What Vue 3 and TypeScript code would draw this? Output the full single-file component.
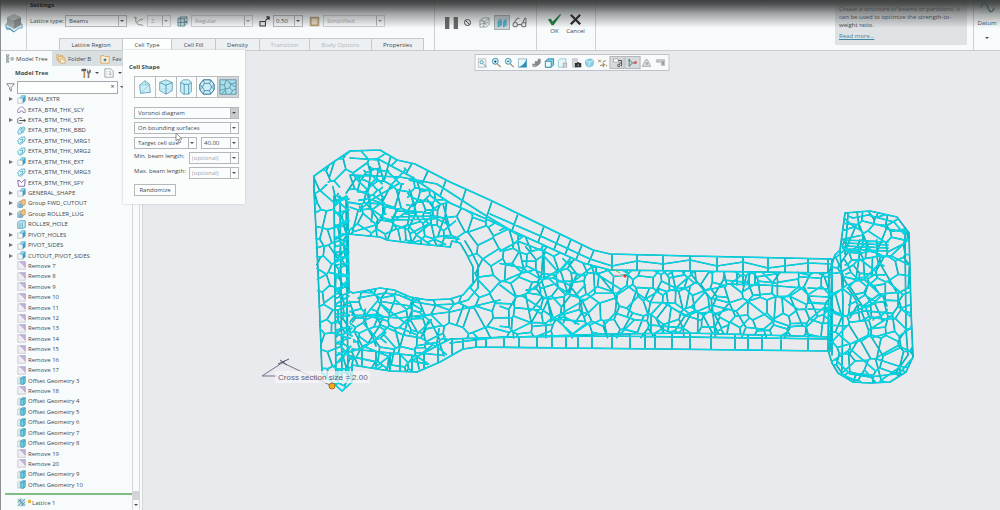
<script setup lang="ts">
import { h, ref } from 'vue'

type Shape = { d: string; f?: string; s?: string; w?: number }
type Pt = [number, number]

const blue = '#3f9fc0'
const pale = '#c9eef8'
const navy = '#4a8ba6'

const icons: Record<string, { box: number; shapes: Shape[] }> = {
  extrude: {
    box: 12,
    shapes: [
      { d: 'M1 4H8V11H1Z', f: '#f4f7f9', s: '#a4b0ba', w: 0.8 },
      { d: 'M4 4L6 1H11V8L8 10V4Z', f: '#3fa8c8', s: '#2a86a5', w: 0.6 },
      { d: 'M4 4L6 1H11L8 4Z', f: '#8ed3e6' },
    ],
  },
  curve: { box: 12, shapes: [{ d: 'M1 10V6Q3 6 3 4Q6 1 9 4Q9 6 11 6V10H8V8H4V10Z', f: '#fff', s: '#8067a8', w: 0.9 }] },
  split: {
    box: 12,
    shapes: [
      { d: 'M7 3Q3 1 1 4V9Q4 11 7 9', f: '#fff', s: '#54515c', w: 1 },
      { d: 'M3 6H11M9 4L11 6L9 8', s: '#3d3d45', w: 1.2 },
    ],
  },
  blend: {
    box: 12,
    shapes: [
      { d: 'M1 8L4 2L8 3L6 10L2 11Z', f: '#d3f0f8', s: blue, w: 0.9 },
      { d: 'M5 4L9 1L11 3L8 9L6 8Z', f: '#a5dcea', s: blue, w: 0.8 },
    ],
  },
  merge: { box: 12, shapes: [{ d: 'M1 6L5 2L10 1L11 4L9 8L5 11L2 10ZM4 5L8 4L7 8L4 9', f: '#e6f8fb', s: '#38a2bd', w: 1 }] },
  surface: { box: 12, shapes: [{ d: 'M1 3L2 11H10L11 2L8 4L6 6L4 4Z', f: '#fff', s: '#71549b', w: 1.1 }] },
  group: {
    box: 12,
    shapes: [
      { d: 'M1 5L3 3H7V11H1Z', f: '#b7d6ef', s: '#6387ac', w: 0.8 },
      { d: 'M5 4L7 1H11V7L9 9H5Z', f: '#f3c477', s: '#c08439', w: 0.8 },
      { d: 'M3 7H7V11H3Z', f: '#7ec4e6', s: '#4986b0', w: 0.6 },
    ],
  },
  hole: { box: 12, shapes: [{ d: 'M1 3L4 1H11V10L8 11H1ZM4 4V10M7 3V10', f: '#c8eaf2', s: '#3f93ae', w: 1 }] },
  remove: {
    box: 12,
    shapes: [
      { d: 'M1 1H11V11H1Z', f: '#f0edf3', s: '#b9b6bf', w: 0.8 },
      { d: 'M4 1H11V8Z', f: '#c3b7df', s: '#9a8dc0', w: 0.6 },
    ],
  },
  offset: {
    box: 12,
    shapes: [
      { d: 'M1 3L4 1V10L1 11Z', f: '#eef6f8', s: '#a3b3bb', w: 0.8 },
      { d: 'M5 3L7 1H11V9L9 11H5Z', f: '#6fd0e6', s: '#2b88a5', w: 0.9 },
      { d: 'M9 3V11M5 3H9L11 1', s: '#2b88a5', w: 0.7 },
    ],
  },
  lattice: {
    box: 12,
    shapes: [
      { d: 'M1 1H11V11H1Z', f: '#bfdfe6' },
      { d: 'M1 11L11 1M1 6L6 1M5 11L11 5M1 2L11 10M4 1L8 11', s: '#4f8b99', w: 0.9 },
    ],
  },
  tree: { box: 12, shapes: [{ d: 'M2 1H5V3H2ZM2 5H5V7H2ZM2 9H5V11H2ZM8 5H11V8H8ZM3 3V5M3 7V9', s: '#6d7175', w: 0.9 }] },
  folders: {
    box: 12,
    shapes: [
      { d: 'M1 1H4L5 2H8V7H1Z', f: '#f4d9a4', s: '#c9995a', w: 0.8 },
      { d: 'M3 3H6L7 4H10V9H3Z', f: '#f7e3bb', s: '#c9995a', w: 0.8 },
      { d: 'M5 6H8L9 7H11V11H5Z', f: '#fbeed2', s: '#c9995a', w: 0.8 },
    ],
  },
  favorite: {
    box: 12,
    shapes: [
      { d: 'M1 2H5L6 3H11V11H1Z', f: '#fbeccc', s: '#cf9f62', w: 0.9 },
      { d: 'M6 5L8 7L6 9L4 7Z', f: '#2b7faa' },
    ],
  },
  tools: {
    box: 12,
    shapes: [
      { d: 'M0 2L2 1H6V4H1Z', f: '#5c5c5c' },
      { d: 'M3 4H5V12H3Z', f: '#c98749' },
      { d: 'M8 1V4H10V1L12 3V5L10 7V12H8V7L7 5V2Z', f: '#777' },
    ],
  },
  sheet: { box: 12, shapes: [{ d: 'M1 1H8L11 4V11H1ZM3 4H4M6 4H8M3 6H4M6 6H9M3 8H4M6 8H9', f: '#fff', s: '#777b80', w: 0.8 }] },
  funnel: { box: 12, shapes: [{ d: 'M1 1H11L7 6V11L5 9V6Z', f: '#fff', s: '#606468', w: 1 }] },
  wedge: { box: 20, shapes: [{ d: 'M4 8L10 3L15 7L16 16L5 17Z', f: pale, s: navy, w: 0.8 }, { d: 'M4 8L15 7L5 17M10 3L11 8', s: '#69b7cf', w: 0.6 }] },
  cube: { box: 20, shapes: [{ d: 'M3 5L10 2L17 5V14L10 18L3 14Z', f: pale, s: navy, w: 0.8 }, { d: 'M3 5L10 8L17 5M10 8V18', s: '#2e7f9f', w: 0.8 }, { d: 'M3 14L10 11L17 14M10 2V11', s: '#83c8dc', w: 0.5 }] },
  prism: { box: 20, shapes: [{ d: 'M4 5L7 2H13L16 5V15L13 18H7L4 15Z', f: pale, s: navy, w: 0.8 }, { d: 'M4 5L8 7H13L16 5M8 7V18M13 7V18', s: '#2e7f9f', w: 0.8 }] },
  soccer: {
    box: 20,
    shapes: [
      { d: 'M6 2H14L18 7V13L14 18H6L2 13V7Z', f: pale, s: '#2f6e8c', w: 1.1 },
      { d: 'M7 6H13L15 10L13 14H7L5 10ZM6 2L7 6M14 2L13 6M18 7L15 10L18 13M14 18L13 14M6 18L7 14M2 13L5 10L2 7', s: '#37789a', w: 0.8 },
    ],
  },
  voronoi: {
    box: 20,
    shapes: [
      { d: 'M1 2H19V18H1Z', f: '#a9dfec', s: '#447d90', w: 0.8 },
      { d: 'M1 7L6 8L8 2M6 8L7 12L1 14M7 12L12 11L13 7L8 2M13 7L19 5M12 11L15 14L19 12M15 14L13 18M7 12L8 18M11 4L16 9L19 9M3 18L7 13', s: '#4a8498', w: 0.8 },
    ],
  },
  product: {
    box: 20,
    shapes: [
      { d: 'M2 11L10 8L18 11V15L15 15L10 19L5 15H2Z', f: '#d7edf3', s: '#5aa2b8', w: 1 },
      { d: 'M3 4L10 7V16L3 12Z', f: '#a4a7aa' },
      { d: 'M17 4L10 7V16L17 12Z', f: '#85898d' },
      { d: 'M3 4L10 1L17 4L10 7Z', f: '#b9bcbe' },
      { d: 'M2 16L6 16L10 19', s: '#387e99', w: 1 },
    ],
  },
  axis: { box: 12, shapes: [{ d: 'M1 1L4 3M3 1V5Q3 9 9 10M4 7L9 3M9 5L11 3M9 9L11 11', s: '#8b8580', w: 1 }] },
  cellbox: { box: 12, shapes: [{ d: 'M1 3L4 1H11V8L8 11H1Z', f: '#bde4ec', s: '#647a83', w: 0.8 }, { d: 'M1 3H8V11M8 3L11 1M1 7H11M4 1V11M8 6H11', s: '#54717b', w: 0.8 }] },
  scale: { box: 12, shapes: [{ d: 'M1 6H7V11H1Z', f: '#eee', s: '#333', w: 1.1 }, { d: 'M7 5L11 1M8 1H11V4', s: '#222', w: 1.3 }] },
  frame: { box: 12, shapes: [{ d: 'M2 2H10V10H2Z', f: '#eadcc8', s: '#bd9666', w: 1.6 }, { d: 'M1 1H11V11H1Z', s: '#9e9b96', w: 0.5 }] },
  pause: { box: 12, shapes: [{ d: 'M0 1H4V12H0ZM8 1H12V12H8Z', f: '#686868' }] },
  forbid: { box: 12, shapes: [{ d: 'M2 6A4 4 0 1 1 10 6A4 4 0 1 1 2 6M3 3L9 9', s: '#404040', w: 1.3 }] },
  wirecube: { box: 12, shapes: [{ d: 'M1 4L4 1H11V8L8 11H1ZM1 4L6 5L11 2M6 5L5 11M3 2L8 9M1 8L10 6', s: '#8c8f91', w: 0.8 }] },
  preview: { box: 12, shapes: [{ d: 'M1 5L5 3V9L1 11ZM7 5L10 3V9L7 11Z', f: '#49b3d5', s: '#2d8fb1', w: 0.5 }, { d: 'M1 3L5 2M7 3L11 2', s: '#77b8cb', w: 1 }] },
  glasses: { box: 14, shapes: [{ d: 'M1 9A2 2 0 1 1 5 9A2 2 0 1 1 1 9M9 9A2 2 0 1 1 13 9A2 2 0 1 1 9 9M5 9H9M2 7L5 3H7M10 7L12 3H13V8', s: '#777', w: 1 }] },
  check: { box: 16, shapes: [{ d: 'M1 8L4 7L6 10L14 2L15 3L7 14H5Z', f: '#1f803d' }] },
  cross: { box: 16, shapes: [{ d: 'M3 3L13 13M13 3L3 13', s: '#222', w: 2.4 }] },
  wave: { box: 16, shapes: [{ d: 'M1 8C3 1 6 1 8 7S13 15 15 8', s: '#2d7d9d', w: 1.4 }, { d: 'M2 13H3M6 13H7M10 13H11M14 3H15M2 3H3', s: '#999', w: 0.8 }] },
  fit: { box: 12, shapes: [{ d: 'M1 1H10V11H1Z', f: '#f3f6f7', s: '#9ca4a8', w: 0.8 }, { d: 'M3 5A2 2 0 1 1 7 5A2 2 0 1 1 3 5M7 7L11 11', s: '#4a98b4', w: 1.1 }] },
  plus: { box: 12, shapes: [{ d: 'M1 4A3 3 0 1 1 8 4A3 3 0 1 1 1 4', f: '#def5fb', s: '#2b88aa', w: 1.1 }, { d: 'M3 4H6M4.5 3V6', s: '#174f6a', w: 1.1 }, { d: 'M7 7L11 11', s: '#a6835c', w: 1.4 }] },
  minus: { box: 12, shapes: [{ d: 'M1 4A3 3 0 1 1 8 4A3 3 0 1 1 1 4', f: '#def5fb', s: '#2b88aa', w: 1.1 }, { d: 'M3 4H6', s: '#174f6a', w: 1.1 }, { d: 'M7 7L11 11', s: '#a6835c', w: 1.4 }] },
  repaint: { box: 12, shapes: [{ d: 'M1 1H11V11H1Z', f: '#edf8fb', s: '#6f9fb0', w: 0.8 }, { d: 'M11 1V11H1Q8 9 11 1', f: '#2f8fb4' }] },
  render: { box: 12, shapes: [{ d: 'M1 10V7H4V4H7L8 1H11V6L8 9L4 11Z', f: '#85898b' }, { d: 'M1 10L5 9', s: '#bcc0c2', w: 1.4 }] },
  solid: { box: 12, shapes: [{ d: 'M1 4L4 1H11V8L8 11H1Z', f: '#7ecfe4', s: '#237c9c', w: 1 }, { d: 'M1 4H8V11H1Z', f: '#eefafd', s: '#237c9c', w: 0.9 }] },
  views: { box: 12, shapes: [{ d: 'M1 3L3 1H10V8L8 11H1Z', f: '#e6f7fb', s: '#80bfd2', w: 0.9 }, { d: 'M7 6H11V11H7Z', f: '#d8d8d8', s: '#8b8b8b', w: 0.7 }] },
  camera: { box: 12, shapes: [{ d: 'M1 1H7V11H1Z', f: '#d4d7d9', s: '#a8acaf', w: 0.6 }, { d: 'M4 6H6L7 5H9L10 6H12V11H4Z', f: '#333' }, { d: 'M7 8H9V9H7Z', f: '#eee' }] },
  perspective: { box: 12, shapes: [{ d: 'M1 3L7 1L11 3L10 9L5 11L2 9Z', f: '#8dd3e7', s: '#5faac1', w: 0.8 }, { d: 'M1 3L6 5L11 3M6 5L5 11', s: '#e6f7fb', w: 0.9 }] },
  datums: { box: 12, shapes: [{ d: 'M1 2L4 5M4 2L1 5M6 5L10 3M3 9L9 8M7 6V11M10 8L11 10', s: '#9a7440', w: 1.1 }] },
  notes: { box: 12, shapes: [{ d: 'M1 1H7V5H1Z', f: '#fff', s: '#888', w: 0.8 }, { d: 'M7 3H11V10M6 9A1 1 0 1 1 9 9A1 1 0 1 1 6 9M8 6H11', s: '#333', w: 1 }] },
  spin: { box: 12, shapes: [{ d: 'M2 2V10M2 10L6 6L2 2M6 6H9', s: '#3a7789', w: 1.1 }, { d: 'M8 4H11V7H8Z', f: '#d1564d' }, { d: 'M1 1H3V3H1Z', f: '#51a05a' }] },
  warning: { box: 12, shapes: [{ d: 'M5 2H7L11 10H1Z', f: '#e1e2e3', s: '#9b9ea0', w: 1 }, { d: 'M5 5H8V8H5Z', f: '#a7aaac' }] },
  stop: { box: 12, shapes: [{ d: 'M1 2H11V9H7V5H1Z', f: '#c5c8ca', s: '#aaaeb0', w: 0.8 }, { d: 'M8 4H10V8H8Z', f: '#8f9395' }] },
}

const Icon = (p: { name: string }) => {
  const g = icons[p.name]
  return h(
    'svg',
    { viewBox: `0 0 ${g.box} ${g.box}`, 'aria-hidden': 'true' },
    g.shapes.map((s) => h('path', { d: s.d, fill: s.f ?? 'none', stroke: s.s ?? 'none', 'stroke-width': s.w ?? 1, 'stroke-linejoin': 'round' })),
  )
}
Icon.props = ['name']

const tabs = [
  { label: 'Lattice Region', w: 'w64' },
  { label: 'Cell Type', w: 'w49', active: true },
  { label: 'Cell Fill', w: 'w44' },
  { label: 'Density', w: 'w44' },
  { label: 'Transition', w: 'w50', off: true },
  { label: 'Body Options', w: 'w62', off: true },
  { label: 'Properties', w: 'w52' },
]

type Row = { label: string; icon: string; open?: boolean }
const named: Row[] = [
  { label: 'MAIN_EXTR', icon: 'extrude', open: true },
  { label: 'EXTA_BTM_THK_SCY', icon: 'curve' },
  { label: 'EXTA_BTM_THK_STF', icon: 'split', open: true },
  { label: 'EXTA_BTM_THK_BBD', icon: 'blend' },
  { label: 'EXTA_BTM_THK_MRG1', icon: 'merge' },
  { label: 'EXTA_BTM_THK_MRG2', icon: 'merge' },
  { label: 'EXTA_BTM_THK_EXT', icon: 'extrude', open: true },
  { label: 'EXTA_BTM_THK_MRG3', icon: 'merge' },
  { label: 'EXTA_BTM_THK_SFY', icon: 'surface' },
  { label: 'GENERAL_SHAPE', icon: 'extrude', open: true },
  { label: 'Group FWD_CUTOUT', icon: 'group', open: true },
  { label: 'Group ROLLER_LUG', icon: 'group', open: true },
  { label: 'ROLLER_HOLE', icon: 'hole' },
  { label: 'PIVOT_HOLES', icon: 'extrude', open: true },
  { label: 'PIVOT_SIDES', icon: 'extrude', open: true },
  { label: 'CUTOUT_PIVOT_SIDES', icon: 'extrude', open: true },
]
const removes = (a: number, b: number): Row[] =>
  Array.from({ length: b - a + 1 }, (_, i) => ({ label: `Remove ${a + i}`, icon: 'remove' }))
const offsets = (a: number, b: number): Row[] =>
  Array.from({ length: b - a + 1 }, (_, i) => ({ label: `Offset Geometry ${a + i}`, icon: 'offset' }))
const rows: Row[] = [...named, ...removes(7, 17), ...offsets(3, 3), ...removes(18, 18), ...offsets(4, 8), ...removes(19, 20), ...offsets(9, 10)]

const shapes = ['wedge', 'cube', 'prism', 'soccer', 'voronoi']
const cell = ref('voronoi')
const tools = ['fit', 'plus', 'minus', 'repaint', 'render', 'solid', 'views', 'camera', 'perspective', 'datums', 'notes', 'spin', 'warning', 'stop']
const pressed = new Set(['notes', 'spin'])
const scaleValue = ref('0.50')
const cellSize = ref('40.00')
const minBeam = ref('')
const maxBeam = ref('')
const search = ref('')

// Lattice geometry ------------------------------------------------------
function random(seed: number) {
  let a = seed
  return () => {
    a = (a + 0x6d2b79f5) | 0
    let t = Math.imul(a ^ (a >>> 15), 1 | a)
    t = (t + Math.imul(t ^ (t >>> 7), 61 | t)) ^ t
    return ((t ^ (t >>> 14)) >>> 0) / 4294967296
  }
}

function inside(p: Pt, poly: Pt[]) {
  let hit = false
  for (let i = 0, j = poly.length - 1; i < poly.length; j = i++) {
    const [xi, yi] = poly[i]
    const [xj, yj] = poly[j]
    if (yi > p[1] !== yj > p[1] && p[0] < ((xj - xi) * (p[1] - yi)) / (yj - yi) + xi) hit = !hit
  }
  return hit
}

function voronoi(box: [number, number, number, number], step: number, seed: number): [Pt, Pt][] {
  const rnd = random(seed)
  const [x0, y0, x1, y1] = box
  const pts: Pt[] = []
  for (let y = y0 - step; y < y1 + step; y += step)
    for (let x = x0 - step; x < x1 + step; x += step) pts.push([x + rnd() * step * 1.25, y + rnd() * step * 1.25])
  const edges: [Pt, Pt][] = []
  const reach = step * 3
  pts.forEach((p, i) => {
    let poly: Pt[] = [
      [p[0] - reach, p[1] - reach],
      [p[0] + reach, p[1] - reach],
      [p[0] + reach, p[1] + reach],
      [p[0] - reach, p[1] + reach],
    ]
    let owner: number[] = [-1, -1, -1, -1]
    pts.forEach((q, k) => {
      const dx = q[0] - p[0]
      const dy = q[1] - p[1]
      if (k === i || Math.abs(dx) > reach * 1.5 || Math.abs(dy) > reach * 1.5) return
      const c = (q[0] * q[0] + q[1] * q[1] - p[0] * p[0] - p[1] * p[1]) / 2
      const out: Pt[] = []
      const own: number[] = []
      for (let n = 0; n < poly.length; n++) {
        const a = poly[n]
        const b = poly[(n + 1) % poly.length]
        const da = a[0] * dx + a[1] * dy - c
        const db = b[0] * dx + b[1] * dy - c
        const t = da / (da - db)
        const m: Pt = [a[0] + (b[0] - a[0]) * t, a[1] + (b[1] - a[1]) * t]
        if (da <= 0) {
          out.push(a)
          own.push(owner[n])
          if (db > 0) {
            out.push(m)
            own.push(k)
          }
        } else if (db <= 0) {
          out.push(m)
          own.push(owner[n])
        }
      }
      poly = out
      owner = own
    })
    poly.forEach((a, n) => {
      if (owner[n] > i) edges.push([a, poly[(n + 1) % poly.length]])
    })
  })
  return edges
}

const hole: Pt[] = [[348, 234], [380, 237], [387, 240], [410, 243], [450, 247], [452, 241], [460, 243], [466, 253], [473, 267], [473, 283], [463, 295], [450, 299], [428, 300], [410, 297], [394, 290], [380, 288], [353, 293], [349, 291]]
const outline: Pt[] = [[314, 176], [332, 163], [350, 151], [380, 150], [397, 160], [415, 164], [450, 182], [490, 200], [593, 250], [610, 254], [690, 256], [832, 259], [830, 351], [660, 349], [477, 347], [463, 349], [440, 362], [417, 372], [390, 371], [352, 365], [352, 382], [342, 391], [322, 373], [318, 270], [314, 190]]
const topRail: Pt[] = [[350, 158], [380, 160], [410, 176], [450, 203], [493, 222], [550, 248], [583, 263], [610, 270], [690, 271], [832, 273]]
const bottomRail: Pt[] = [[352, 349], [390, 353], [418, 356], [450, 339], [610, 334], [690, 333], [830, 337]]
const topOuter: Pt[] = [[380, 150], [397, 160], [415, 164], [450, 182], [490, 200], [593, 250], [610, 254], [690, 256], [832, 259]]
const bottomOuter: Pt[] = [[352, 365], [390, 371], [417, 372], [440, 362], [463, 349], [477, 347], [660, 349], [830, 351]]
const face: Pt[] = [[410, 176], [450, 203], [493, 222], [550, 248], [583, 263], [610, 270], [690, 271], [832, 273], [830, 337], [690, 333], [610, 334], [450, 339], [418, 356], [405, 320], [405, 220]]
const drum: Pt[] = [[845, 213], [870, 211], [897, 217], [909, 233], [911, 310], [913, 357], [906, 372], [890, 382], [870, 383], [853, 382], [838, 373], [832, 363], [828, 350], [829, 273], [835, 255], [840, 250]]
const strip: Pt[] = [[314, 178], [322, 184], [347, 190], [349, 230], [349, 300], [352, 330], [352, 382], [342, 391], [322, 373], [317, 270]]
const column: Pt[] = [[334, 195], [347, 190], [349, 300], [352, 380], [342, 388], [336, 330]]
const cap: Pt[] = [[314, 176], [332, 163], [350, 151], [380, 150], [397, 160], [412, 176], [430, 190], [452, 204], [460, 243], [450, 247], [348, 234], [346, 190]]
const lower: Pt[] = [[349, 293], [380, 288], [412, 298], [440, 330], [455, 350], [417, 370], [390, 371], [352, 365]]

type Layer = { area: Pt[]; step: number; seed: number }
const layers: Layer[] = [
  { area: face, step: 15, seed: 11 },
  { area: [[500, 226], [583, 263], [610, 270], [832, 273], [830, 337], [500, 338]], step: 26, seed: 5 },
  { area: [[520, 245], [583, 265], [590, 325], [530, 320]], step: 16, seed: 29 },
  { area: [[660, 272], [725, 272], [730, 333], [655, 333]], step: 17, seed: 8 },
  { area: cap, step: 16, seed: 7 },
  { area: [[350, 170], [382, 165], [410, 190], [450, 212], [450, 245], [385, 238], [350, 233]], step: 19, seed: 3 },
  { area: [[355, 172], [380, 168], [386, 215], [362, 226]], step: 10, seed: 43 },
  { area: strip, step: 14, seed: 17 },
  { area: column, step: 10, seed: 23 },
  { area: lower, step: 16, seed: 37 },
  { area: lower, step: 24, seed: 4 },
  { area: [[352, 310], [385, 308], [386, 345], [354, 348]], step: 10, seed: 2 },
  { area: drum, step: 16, seed: 19 },
  { area: drum, step: 23, seed: 31 },
  { area: [[843, 240], [882, 240], [888, 320], [850, 320]], step: 12, seed: 13 },
]

const bright: string[] = []
const shade: string[] = []
const f = (n: number) => n.toFixed(1)
function beam(a: Pt, b: Pt) {
  const steep = Math.abs(b[1] - a[1]) > Math.abs(b[0] - a[0]) * 1.2
  ;(steep ? shade : bright).push(`M${f(a[0])} ${f(a[1])}L${f(b[0])} ${f(b[1])}`)
}
function chain(line: Pt[], closed = false) {
  line.forEach((p, i) => {
    if (i) beam(line[i - 1], p)
  })
  if (closed) beam(line[line.length - 1], line[0])
}
function heightAt(line: Pt[], x: number) {
  for (let i = 1; i < line.length; i++) {
    const [ax, ay] = line[i - 1]
    const [bx, by] = line[i]
    if (x >= ax && x <= bx) return ay + ((by - ay) * (x - ax)) / (bx - ax)
  }
  return line[line.length - 1][1]
}
function rungs(a: Pt[], b: Pt[], xs: number[], lean = 0) {
  xs.forEach((x) => beam([x, heightAt(a, x)], [x - lean, heightAt(b, x - lean)]))
}
// Shortens a beam that leaves the area so that it stops on the boundary.
function trimmed(from: Pt, to: Pt, ok: (p: Pt) => boolean): Pt {
  let a = from
  let b = to
  for (let i = 0; i < 8; i++) {
    const m: Pt = [(a[0] + b[0]) / 2, (a[1] + b[1]) / 2]
    if (ok(m)) a = m
    else b = m
  }
  return a
}

for (const l of layers) {
  const xs = l.area.map((p) => p[0])
  const ys = l.area.map((p) => p[1])
  const ok = (p: Pt) => inside(p, l.area) && !inside(p, hole)
  for (const [a, b] of voronoi([Math.min(...xs), Math.min(...ys), Math.max(...xs), Math.max(...ys)], l.step, l.seed)) {
    if (ok(a) && ok(b)) beam(a, b)
    else if (ok(a)) beam(a, trimmed(a, b, ok))
    else if (ok(b)) beam(b, trimmed(b, a, ok))
  }
}
chain(outline, true)
chain(hole, true)
chain(hole.slice(6, 17).map(([x, y]): Pt => [x + 5, y + (y > 275 ? 5 : -2)]))
chain(topRail)
chain(bottomRail)
chain([[450, 343], [500, 337], [610, 336], [830, 339]])
chain([[490, 214], [545, 238], [590, 259], [612, 266], [637, 261], [663, 264], [690, 260], [717, 266], [743, 262], [768, 268], [808, 263], [832, 264]])
chain([[350, 175], [400, 177], [437, 184], [480, 212], [520, 236]])
chain([[352, 315], [400, 318], [450, 312], [500, 300]])
rungs(topOuter, topRail, [397, 412, 428, 446, 466, 492, 518, 544, 560, 571, 582, 594], 6)
rungs(topOuter, topRail, [612, 637, 663, 690, 717, 743, 768, 785, 808, 828])
rungs(bottomOuter, bottomRail, [362, 376, 390, 400, 412, 424, 438, 452, 463, 476, 486, 504, 519, 537, 552, 566, 578, 592, 612, 630, 645, 655, 672, 690, 711, 735, 748, 762, 781, 808])
chain(drum, true)
chain([[848, 216], [853, 218], [868, 215], [894, 222], [905, 235], [906, 330], [908, 355], [895, 374], [870, 377], [850, 374], [836, 360]])
chain([[840, 250], [843, 300], [842, 370]])
chain([[832, 262], [832, 355]])
chain([[848, 214], [845, 254]])
for (const x of [737, 743, 749, 755]) beam([x, 272], [x, 285])
chain([[728, 284], [765, 285], [803, 288]])
for (const y of [288, 296, 303, 309]) beam([808, y], [829, y + 1])
for (const x of [334, 340, 346]) beam([x, 196], [x + 2, 380])
for (let y = 200; y < 372; y += 13) beam([336, y], [349, y - ((y * 5) % 9)])
for (const y of [240, 243, 246, 249]) beam([845, y], [888, y + 2])
for (const y of [217, 220]) beam([392, y], [434, y - 1])

const brightPath = bright.join('')
const shadePath = shade.join('')
</script>

<template>
  <div class="app">
    <header class="ribbon">
      <div class="product"><Icon name="product" class="product-icon" /></div>
      <section class="settings">
        <h2>Settings</h2>
        <div class="fields">
          <label for="ltype">Lattice type:</label>
          <span class="pick pick-type"><select id="ltype"><option>Beams</option></select></span>
          <Icon name="axis" class="ic11" />
          <span class="pick pick-axis off"><select aria-label="Axis" disabled><option>Z</option></select></span>
          <Icon name="cellbox" class="ic11" />
          <span class="pick pick-reg off"><select aria-label="Cell layout" disabled><option>Regular</option></select></span>
          <Icon name="scale" class="ic11" />
          <span class="combo combo-scale"><input v-model="scaleValue" aria-label="Scale" /><button aria-label="Scale values"></button></span>
          <Icon name="frame" class="ic11" />
          <span class="pick pick-simple off"><select aria-label="Representation" disabled><option>Simplified</option></select></span>
        </div>
        <nav class="tabs">
          <button v-for="t in tabs" :key="t.label" :class="[t.w, { active: t.active }]" :disabled="t.off">{{ t.label }}</button>
        </nav>
      </section>
      <section class="controls">
        <button aria-label="Pause"><Icon name="pause" class="ic12" /></button>
        <button aria-label="No preview"><Icon name="forbid" class="ic9" /></button>
        <button aria-label="Wireframe preview"><Icon name="wirecube" class="ic11" /></button>
        <button class="on" aria-label="Attached preview"><Icon name="preview" class="ic11" /></button>
        <button aria-label="Verify"><Icon name="glasses" class="ic14" /></button>
      </section>
      <section class="confirm">
        <button><Icon name="check" class="ic14" />OK</button>
        <button><Icon name="cross" class="ic14" />Cancel</button>
      </section>
      <aside class="info">
        <p>Create a structure of beams or partitions. It can be used to optimize the strength-to-weight ratio.</p>
        <a href="#">Read more...</a>
      </aside>
      <button class="datum"><Icon name="wave" class="ic14" /><span>Datum</span><i class="caret"></i></button>
    </header>

    <main class="body">
      <section class="side">
        <nav class="side-tabs">
          <button class="current"><Icon name="tree" class="ic9" />Model Tree</button>
          <button><Icon name="folders" class="ic10" />Folder B</button>
          <button><Icon name="favorite" class="ic10" />Fav</button>
        </nav>
        <div class="side-head">
          <h2>Model Tree</h2>
          <button aria-label="Tree tools"><Icon name="tools" class="ic10" /><i class="caret"></i></button>
          <button aria-label="Tree columns"><Icon name="sheet" class="ic10" /><i class="caret"></i></button>
        </div>
        <div class="filter">
          <Icon name="funnel" class="ic9" />
          <div class="search"><input v-model="search" aria-label="Filter tree" /><button aria-label="Clear">×</button></div>
          <i class="caret"></i>
        </div>
        <div class="tree-wrap">
          <div class="tree">
            <ul>
              <li v-for="r in rows" :key="r.label">
                <i :class="{ twist: r.open }"></i>
                <Icon :name="r.icon" class="ic9" />
                <span>{{ r.label }}</span>
              </li>
            </ul>
            <div class="last"><i></i><Icon name="lattice" class="ic9" /><b></b><span>Lattice 1</span></div>
          </div>
          <div class="scroll"><span class="thumb"></span><button aria-label="Scroll down"><i class="caret"></i></button></div>
        </div>
      </section>

      <section class="view">
        <svg class="model" viewBox="143 51 857 459" role="img" aria-label="Lattice model">
          <path class="beams under" :d="shadePath + brightPath" />
          <path class="beams dark" :d="shadePath" />
          <path class="beams light" :d="brightPath" />
          <path d="M611 268L620 273" stroke="#5cc06a" />
          <path d="M613 275L624 276" stroke="#efa6a2" />
          <circle cx="625" cy="276" r="1.5" fill="#e2362e" />
          <path d="M262 376L285 361M262 376H277M281 362L332 386" fill="none" stroke="#77728d" />
          <path d="M278 364L289 359M280 360L287 365" stroke="#55506b" />
          <rect x="275" y="371" width="95" height="12" fill="#f6f6fa" fill-opacity=".72" />
          <text x="278" y="380">Cross section size = 2.00</text>
          <circle cx="332" cy="386" r="3" fill="#f7a823" stroke="#a36a17" />
        </svg>
        <div class="tools">
          <button v-for="t in tools" :key="t" :class="{ on: pressed.has(t) }" :aria-label="t"><Icon :name="t" class="ic10" /></button>
        </div>
      </section>
    </main>

    <section class="popup">
      <h3>Cell Shape</h3>
      <div class="cells">
        <button v-for="s in shapes" :key="s" :class="{ on: cell === s }" :aria-label="s" @click="cell = s"><Icon :name="s" class="ic18" /></button>
      </div>
      <div class="form">
        <span class="pick gray"><select aria-label="Cell pattern"><option>Voronoi diagram</option></select></span>
        <span class="pick"><select aria-label="Seed placement"><option>On bounding surfaces</option></select></span>
        <div class="pair">
          <span class="pick pick-target"><select aria-label="Size mode"><option>Target cell size</option></select></span>
          <span class="combo"><input v-model="cellSize" aria-label="Target cell size" /><button aria-label="Size values"></button></span>
        </div>
        <div class="line">
          <label for="minb">Min. beam length:</label>
          <span class="combo"><input id="minb" v-model="minBeam" placeholder="(optional)" /><button aria-label="Minimum values"></button></span>
        </div>
        <div class="line">
          <label for="maxb">Max. beam length:</label>
          <span class="combo"><input id="maxb" v-model="maxBeam" placeholder="(optional)" /><button aria-label="Maximum values"></button></span>
        </div>
      </div>
      <button class="randomize">Randomize</button>
      <svg class="cursor" viewBox="0 0 8 12" aria-hidden="true"><path d="M1 1V9L3 7L4 11L6 10L4 7H7Z" fill="#fff" stroke="#777" stroke-width=".8" /></svg>
    </section>
  </div>
</template>

<style>
body {
  margin: 0;
}
</style>

<style scoped>
.app {
  position: relative;
  display: flex;
  flex-direction: column;
  min-height: 100vh;
  box-sizing: border-box;
  border-left: 1px solid #8d9092;
  background: #e8eaee;
  color: #45484b;
  font: 6px/8px "Open Sans", "Noto Sans", sans-serif;
}
.app::after {
  content: "";
  position: absolute;
  inset: 0 0 auto -1px;
  height: 28px;
  background: linear-gradient(#3e4040 0, rgba(62, 64, 64, 0.9) 15%, rgba(62, 64, 64, 0.45) 50%, rgba(62, 64, 64, 0));
  pointer-events: none;
}
.app *,
.app *::before {
  box-sizing: border-box;
}
button,
input,
select {
  margin: 0;
  padding: 0;
  border: 0;
  border-radius: 0;
  background: none;
  color: inherit;
  font: inherit;
  min-width: 0;
}
h2,
h3,
p,
ul {
  margin: 0;
  padding: 0;
  font-size: inherit;
  list-style: none;
}
svg {
  display: block;
  flex: none;
}
.ic9 { width: 9px; height: 9px; }
.ic10 { width: 10px; height: 10px; }
.ic11 { width: 11px; height: 11px; }
.ic12 { width: 13px; height: 13px; }
.ic14 { width: 15px; height: 15px; }
.ic18 { width: 18px; height: 18px; }

.ribbon {
  display: flex;
  height: 51px;
  border-bottom: 1px solid #c9cccf;
  background: #f7fbfc;
}
.product {
  width: 26px;
  padding: 13px 0 0 3px;
  border-right: 1px solid #d0d3d5;
}
.product-icon {
  width: 20px;
  height: 20px;
}
.settings {
  display: flex;
  flex-direction: column;
  width: 408px;
  padding-left: 3px;
  border-right: 1px solid #cdd0d2;
}
.settings h2 {
  position: relative;
  z-index: 1;
  height: 14px;
  color: #1d1e1f;
  font-size: 6px;
  line-height: 10px;
}
.fields {
  display: flex;
  align-items: center;
  height: 14px;
}
.fields > svg {
  margin: 0 3px 0 6px;
}
.fields > label {
  width: 35px;
  white-space: nowrap;
}
.pick,
.combo {
  position: relative;
  display: flex;
  height: 12px;
  border: 1px solid #b5b8bb;
  background: #fbfcfd;
}
.pick select {
  width: 100%;
  padding: 0 10px 0 3px;
  appearance: none;
  line-height: 10px;
  opacity: 1;
}
.pick::before,
.combo button {
  content: "";
  width: 8px;
  border-left: 1px solid #b5b8bb;
}
.pick::before {
  position: absolute;
  inset: 0 0 0 auto;
  pointer-events: none;
}
.pick::after,
.combo::after {
  content: "";
  position: absolute;
  right: 2px;
  top: 4px;
  border: 2px solid transparent;
  border-top: 2px solid #4f5254;
  border-bottom: 0;
  pointer-events: none;
}
.combo input {
  flex: 1;
  width: 0;
  padding: 0 2px;
}
.combo input::placeholder {
  color: #a5a7a9;
}
.off {
  color: #a9acae;
  border-color: #cfd2d4;
}
.off::after {
  border-top-color: #999;
}
.pick-type { width: 62px; }
.pick-axis { width: 24px; }
.pick-reg { width: 62px; }
.combo-scale { width: 30px; }
.pick-simple { width: 62px; }
.tabs {
  display: flex;
  height: 12px;
  margin: auto 0 0 29px;
}
.tabs button {
  border: 1px solid #c6c9cc;
  border-width: 1px 1px 0 0;
  background: #edf0f2;
  white-space: nowrap;
}
.tabs button:first-child {
  border-left-width: 1px;
}
.tabs .active {
  background: #fdfefe;
}
.tabs button:disabled {
  color: #b4b7b9;
}
.w64 { width: 64px; }
.w49 { width: 49px; }
.w44 { width: 44px; }
.w50 { width: 50px; }
.w62 { width: 62px; }
.w52 { width: 52px; }
.controls {
  display: flex;
  align-items: center;
  gap: 2px;
  width: 102px;
  padding: 0 9px 6px 9px;
  border-right: 1px solid #cdd0d2;
}
.controls button {
  display: grid;
  place-items: center;
  flex: 1;
  height: 15px;
}
.controls .on {
  border: 1px solid #a4abaf;
  background: #cbd2d6;
}
.confirm {
  display: flex;
  width: 59px;
  padding: 12px 9px 0 7px;
  border-right: 1px solid #cdd0d2;
}
.confirm button {
  display: flex;
  flex-direction: column;
  align-items: center;
  flex: 1;
}
.info {
  width: 132px;
  height: 45px;
  margin-left: auto;
  padding: 5px 3px 0 4px;
  background: #dfe2e4;
}
.info p {
  position: relative;
  z-index: 1;
}
.info a {
  display: block;
  margin-top: 3px;
  color: #3d87a6;
}
.datum {
  display: flex;
  flex-direction: column;
  align-items: center;
  width: 27px;
  margin-left: 6px;
  border-left: 1px solid #cdd0d2;
}
.datum span {
  margin: 4px 0 10px;
}
.caret {
  flex: none;
  width: 4px;
  border: 2px solid transparent;
  border-top: 2px solid #4b4e51;
  border-bottom: 0;
}

.body {
  display: flex;
  flex: 1;
}
.side {
  display: flex;
  flex-direction: column;
  width: 142px;
  padding-right: 2px;
  border-right: 1px solid #d3d6da;
  background: #f7fbfc;
}
.side-tabs {
  display: flex;
  height: 15px;
  background: #d9dee0;
}
.side-tabs button {
  display: flex;
  align-items: center;
  gap: 2px;
  padding: 0 5px 0 4px;
  white-space: nowrap;
}
.side-tabs .current {
  width: 51px;
  background: #f7fbfc;
}
.side-head {
  display: flex;
  align-items: center;
  height: 14px;
  padding-left: 14px;
}
.side-head h2 {
  width: 66px;
}
.side-head button {
  display: flex;
  align-items: center;
  gap: 4px;
  width: 23px;
}
.filter {
  display: flex;
  align-items: center;
  gap: 2px;
  height: 14px;
  padding-left: 5px;
}
.search {
  display: flex;
  width: 101px;
  height: 13px;
  border: 1px solid #a8abad;
  background: #fdfefe;
}
.search input {
  flex: 1;
}
.search button {
  width: 9px;
  font-size: 7px;
}
.tree-wrap {
  display: flex;
  flex: 1;
}
.tree {
  display: flex;
  flex: 1;
  flex-direction: column;
}
.tree ul {
  display: grid;
  flex: 1;
  grid-auto-rows: minmax(8px, 1fr);
  margin-bottom: 3px;
}
.tree li,
.last {
  display: flex;
  align-items: center;
  gap: 2px;
  padding-left: 8px;
  white-space: nowrap;
}
.tree li > i,
.last > i {
  flex: none;
  width: 4px;
  margin-right: 2px;
}
.tree li .twist {
  border: 2px solid transparent;
  border-left: 4px solid #737678;
  border-right: 0;
}
.last {
  height: 17px;
  margin-left: 4px;
  padding-left: 4px;
  border-top: 2px solid #7fbd85;
}
.last b {
  width: 3px;
  height: 3px;
  margin: 0 -1px 2px 0;
  background: #e1b83a;
}
.scroll {
  display: flex;
  flex-direction: column;
  justify-content: flex-end;
  width: 8px;
  border: 1px solid #d5d7da;
  border-width: 0 1px;
}
.thumb {
  height: 9px;
  background: #d2d5d7;
}
.scroll button {
  display: grid;
  place-items: center;
  height: 10px;
}

.view {
  position: relative;
  flex: 1;
  min-width: 0;
}
.model {
  width: 100%;
  height: 100%;
}
.beams {
  fill: none;
  stroke-linecap: round;
}
.under {
  stroke: #0aa3b0;
  stroke-width: 1.6;
}
.dark {
  stroke: #03c3d0;
  stroke-width: 1;
}
.light {
  stroke: #00dcea;
  stroke-width: 1.2;
}
.model text {
  fill: #605b78;
  font: 8px "Liberation Sans", Arial, sans-serif;
}
.tools {
  position: absolute;
  top: 3px;
  left: 50%;
  display: flex;
  width: 195px;
  height: 17px;
  padding: 1px;
  border: 1px solid #bfc3c8;
  background: #f8fafb;
  transform: translateX(-50%);
}
.tools button {
  display: grid;
  place-items: center;
  flex: 1;
}
.tools .on {
  border: 1px solid #b4b8bb;
  background: #d8dbde;
}

.popup {
  position: absolute;
  top: 50px;
  left: 122px;
  width: 122px;
  padding: 12px 6px 8px;
  background: #fbfdfd;
  box-shadow: 0 0 2px #bfc3c8;
}
.popup h3 {
  line-height: 10px;
}
.cells {
  display: flex;
  margin: 4px 0 9px 5px;
  border: 1px solid #b9bdc0;
}
.cells button {
  display: grid;
  place-items: center;
  flex: 1;
  height: 20px;
}
.cells button + button {
  border-left: 1px solid #b9bdc0;
}
.cells .on {
  background: #d0d6da;
}
.form {
  display: grid;
  gap: 3px;
  margin-left: 5px;
}
.gray::before {
  background: #c9cccf;
}
.pair {
  display: flex;
  gap: 4px;
}
.pick-target {
  width: 63px;
}
.pair .combo,
.line .combo {
  flex: 1;
}
.line {
  display: flex;
  gap: 1px;
}
.line label {
  width: 54px;
  white-space: nowrap;
}
.randomize {
  display: block;
  width: 42px;
  height: 12px;
  margin: 5px 0 0 5px;
  border: 1px solid #b5b8bb;
}
.cursor {
  position: absolute;
  top: 82px;
  left: 52px;
  width: 8px;
  height: 12px;
}
</style>
